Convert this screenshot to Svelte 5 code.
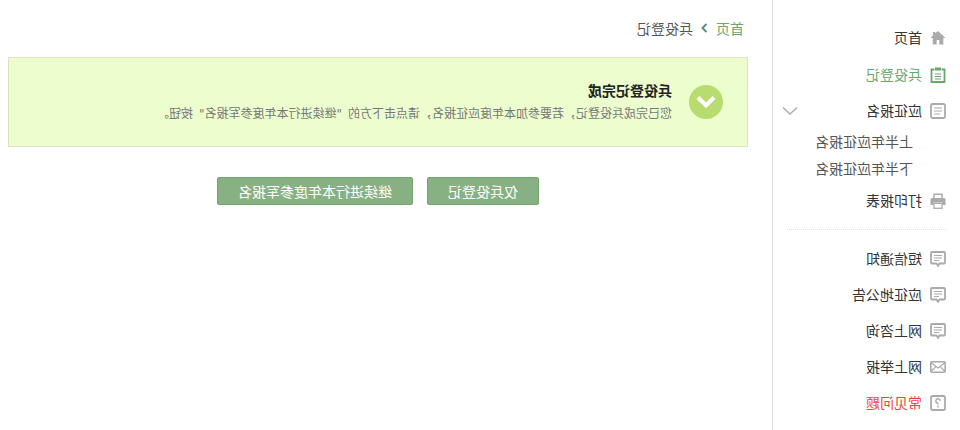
<script>
  const top = [
    { label: '首页', icon: 'home' },
    { label: '兵役登记', icon: 'clip', active: true },
    { label: '应征报名', icon: 'list', caret: true },
  ];
  const bottom = [
    { label: '短信通知', icon: 'chat' },
    { label: '应征地公告', icon: 'chat' },
    { label: '网上咨询', icon: 'chat' },
    { label: '网上举报', icon: 'mail' },
    { label: '常见问题', icon: 'help', danger: true },
  ];
</script>

{#snippet icon(name)}
  <svg class="ico" class:green={name === 'clip'} viewBox="0 0 16 16" width="16" height="16">
    {#if name === 'home'}
      <path d="M8 1 0.500 8h2.200v6.500h4v-4.500h2.600v4.500h4V8h2.200L13 5.200V2h-2.200v1.200z" fill="currentColor" />
    {:else if name === 'clip'}
      <path d="M4.500 2.500H1.500v12.500h13V2.500h-3" fill="none" stroke="currentColor" stroke-width="1.800" />
      <rect x="5" y="0.500" width="6" height="3" fill="currentColor" />
      <path d="M5 7h6M5 9.500h6M5 12h6" stroke="currentColor" stroke-width="1" />
    {:else if name === 'list'}
      <rect x="1" y="1" width="14" height="14" rx="1.500" fill="none" stroke="currentColor" stroke-width="1.800" />
      <path d="M4 5h8M4 8h8M6 11h6" stroke="currentColor" stroke-width="1.200" />
    {:else if name === 'print'}
      <path d="M4 5V1.200h8V5" fill="none" stroke="currentColor" stroke-width="1.500" />
      <path d="M2 5h12a1.500 1.500 0 0 1 1.500 1.500V12H12.500V9.500h-9V12H.5V6.500A1.500 1.500 0 0 1 2 5z" fill="currentColor" />
      <rect x="4" y="10.300" width="8" height="5" fill="none" stroke="currentColor" stroke-width="1.300" />
    {:else if name === 'chat'}
      <path d="M2 1h12a1 1 0 0 1 1 1v9.500a1 1 0 0 1-1 1H9.500L8 14.800 6.500 12.500H2a1 1 0 0 1-1-1V2a1 1 0 0 1 1-1z" fill="none" stroke="currentColor" stroke-width="1.800" />
      <path d="M4 4.500h8M4 7h8M7 9.500h5" stroke="currentColor" stroke-width="1.100" />
    {:else if name === 'mail'}
      <rect x="0.800" y="2.800" width="14.400" height="10.400" rx="1.200" fill="none" stroke="currentColor" stroke-width="1.600" />
      <path d="M1 3.500l7 5.500 7-5.500M1 12.500l4.800-4.800M15 12.500l-4.800-4.800" fill="none" stroke="currentColor" stroke-width="1.200" />
    {:else if name === 'help'}
      <rect x="1" y="1" width="14" height="14" rx="1.500" fill="none" stroke="currentColor" stroke-width="1.800" />
      <path d="M5.800 6a2.200 2.200 0 1 1 3 2c-.6.300-.8.700-.8 1.500M8 10.500v2" fill="none" stroke="currentColor" stroke-width="1.400" />
    {/if}
  </svg>
{/snippet}

<div class="page">
  <aside class="side">
    <ul class="menu">
      {#each top as item}
        <li class="item" class:active={item.active}>
          {@render icon(item.icon)}
          <span>{item.label}</span>
          {#if item.caret}
            <svg class="caret" viewBox="0 0 16 10" width="16" height="10">
              <path d="M1 1.500 8 8l7-6.500" fill="none" stroke="currentColor" stroke-width="1.300" />
            </svg>
          {/if}
        </li>
      {/each}
      <li class="sub">上半年应征报名</li>
      <li class="sub">下半年应征报名</li>
      <li class="item">
        {@render icon('print')}
        <span>打印报表</span>
      </li>
    </ul>
    <div class="rule"></div>
    <ul class="menu">
      {#each bottom as item}
        <li class="item" class:danger={item.danger}>
          {@render icon(item.icon)}
          <span>{item.label}</span>
        </li>
      {/each}
    </ul>
  </aside>

  <main class="main">
    <nav class="crumbs">
      <span class="home">首页</span>
      <svg viewBox="0 0 7 10" width="7" height="10">
        <path d="M1.500 1l4 4-4 4" fill="none" stroke="#5a8f7c" stroke-width="2" />
      </svg>
      <span>兵役登记</span>
    </nav>

    <section class="notice">
      <div class="badge">
        <svg viewBox="0 0 20 14" width="20" height="14">
          <path d="M2 2.500 10 10.500l8-8" fill="none" stroke="#fff" stroke-width="4" />
        </svg>
      </div>
      <div class="copy">
        <h2>兵役登记完成</h2>
        <p>您已完成兵役登记，若要参加本年度应征报名，请点击下方的 "继续进行本年度参军报名" 按钮。</p>
      </div>
    </section>

    <div class="actions">
      <button class="btn first">仅兵役登记</button>
      <button class="btn second">继续进行本年度参军报名</button>
    </div>
  </main>
</div>

<style>
  :global(body) {
    margin: 0;
    background: #fff;
  }
  .page {
    display: flex;
    width: 960px;
    height: 430px;
    overflow: hidden;
    transform: scaleX(-1);
    font-family: "Liberation Sans", "Noto Sans CJK SC", sans-serif;
    font-size: 14px;
    color: #333;
  }
  .side {
    width: 188px;
    flex: none;
    box-sizing: border-box;
    border-right: 1px solid #ddd;
    padding-top: 20px;
    margin-right: 24px;
  }
  .menu {
    list-style: none;
    margin: 0;
    padding: 0;
  }
  .item {
    display: flex;
    align-items: center;
    gap: 8px;
    height: 36px;
    padding-left: 14px;
  }
  .item span {
    line-height: 36px;
  }
  .ico {
    flex: none;
    color: #aaa;
  }
  .active {
    color: #6aa66c;
    margin-top: 1px;
  }
  .ico.green {
    color: #6aa66c;
  }
  .caret {
    color: #aaa;
    margin-left: 60px;
  }
  .sub {
    height: 27px;
    line-height: 27px;
    padding-left: 47px;
    color: #555;
  }
  .rule {
    height: 0;
    border-top: 1px dotted #ddd;
    margin: 10px 14px 11px;
  }
  .danger span {
    color: #f0432e;
  }
  .main {
    width: 740px;
    flex: none;
  }
  .crumbs {
    display: flex;
    align-items: center;
    gap: 8px;
    height: 20px;
    margin-top: 18px;
    margin-left: 4px;
    color: #555;
  }
  .home {
    color: #6aa66c;
  }
  .notice {
    display: flex;
    align-items: center;
    box-sizing: border-box;
    height: 90px;
    margin-top: 19px;
    padding-left: 24px;
    background: #ecfdce;
    border: 1px solid #dfe3c4;
  }
  .badge {
    flex: none;
    width: 34px;
    height: 34px;
    border-radius: 50%;
    background: #b8dc6f;
    display: flex;
    align-items: center;
    justify-content: center;
    margin-right: 17px;
  }
  .copy h2 {
    margin: 0 0 5px;
    font-size: 14px;
    line-height: 18px;
    font-weight: 700;
    color: #222;
  }
  .copy p {
    margin: 0;
    font-family: "DejaVu Sans", "Noto Sans CJK SC", sans-serif;
    font-size: 12px;
    line-height: 18px;
    color: #777;
    word-spacing: 2.200px;
  }
  .actions {
    display: flex;
    gap: 14px;
    margin-top: 30px;
    margin-left: 209px;
  }
  .btn {
    height: 28px;
    box-sizing: border-box;
    padding: 0;
    border: 1px solid #74a56c;
    border-radius: 2px;
    background: #87b182;
    color: #fff;
    font: inherit;
    font-size: 14px;
  }
  .first {
    width: 112px;
  }
  .second {
    width: 196px;
  }
</style>
